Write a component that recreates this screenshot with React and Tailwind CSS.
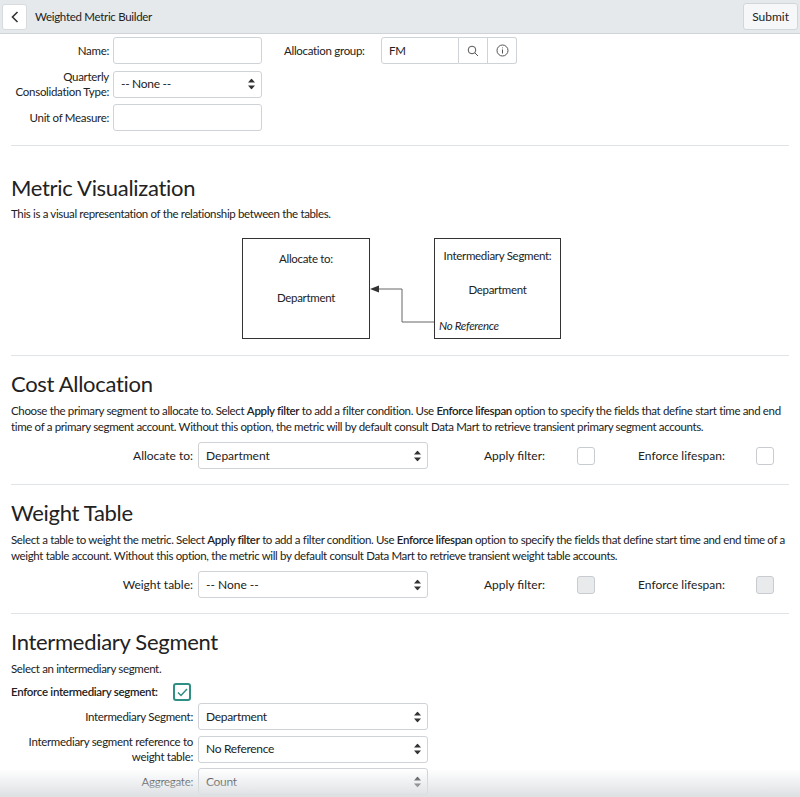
import React from "react";

const F = { fontFamily: "Lato, 'Open Sans', sans-serif" };

function Arrows() {
  return (
    <svg width="7" height="11" viewBox="0 0 7 11" className="absolute right-[6px] top-1/2 -translate-y-1/2">
      <path d="M3.5 0L7 4H0z M3.5 11L0 7h7z" fill="#333" />
    </svg>
  );
}
function Select({ value, w = "w-[230px]" }) {
  return (
    <div className={`relative ${w} h-[27px] border border-[#cfd3d7] rounded-[3px] bg-white flex items-center pl-[7px] text-[12px] text-[#222]`}>
      {value}
      <Arrows />
    </div>
  );
}
function Box({ disabled }) {
  return <div className={`w-[18px] h-[18px] rounded-[3px] border border-[#c8ccd0] ${disabled ? "bg-[#e8eaec]" : "bg-white"}`} />;
}
function Row({ label, value, disabled }) {
  return (
    <div className="flex items-center h-[27px] whitespace-nowrap">
      <div className="w-[198px] text-right text-[12px] pr-[5px] text-[#222]">{label}</div>
      <Select value={value} />
      <div className="w-[117px] text-right text-[12px] text-[#222]">Apply filter:</div>
      <div className="ml-[32px]"><Box disabled={disabled} /></div>
      <div className="w-[130px] text-right text-[12px] text-[#222]">Enforce lifespan:</div>
      <div className="ml-[31px]"><Box disabled={disabled} /></div>
    </div>
  );
}
const Hr = () => <div className="mx-[11px] border-t border-[#e1e4e7]" />;
const H = ({ children }) => <h2 className="px-[11px] text-[22px] text-[#222] leading-[28px] tracking-[-0.3px]">{children}</h2>;
const P = ({ children, className = "" }) => <p className={`px-[11px] text-[11.5px] leading-[16px] tracking-[-0.35px] ${className}`}>{children}</p>;

export default function App() {
  return (
    <div style={F} className="w-[800px] h-[797px] overflow-hidden bg-white relative text-[#222]">
      <div className="h-[34px] bg-[#e6e9ec] border-b border-[#cfd3d7] flex items-center">
        <div className="ml-[2px] w-[25px] h-[26px] bg-white border border-[#d8dbde] rounded-[3px] flex items-center justify-center">
          <svg width="8" height="12" viewBox="0 0 8 12"><path d="M6.5 1L1.5 6l5 5" stroke="#333" strokeWidth="1.6" fill="none" /></svg>
        </div>
        <div className="ml-[8px] text-[11.5px] tracking-[-0.3px]">Weighted Metric Builder</div>
        <div className="ml-auto mr-[2px] h-[27px] px-[8px] bg-[#f6f7f8] border border-[#d3d6d9] rounded-[3px] flex items-center text-[12px]">Submit</div>
      </div>

      <div className="flex pt-[3px] text-[11.5px] tracking-[-0.3px]">
        <div className="flex flex-col gap-[5px]">
          <div className="flex items-center"><div className="w-[113px] text-right pr-[4px]">Name:</div><div className="w-[149px] h-[27px] border border-[#cfd3d7] rounded-[3px]" /></div>
          <div className="flex items-center"><div className="w-[113px] text-right pr-[4px] leading-[15px]">Quarterly<br />Consolidation Type:</div><Select value="-- None --" w="w-[149px]" /></div>
          <div className="flex items-center"><div className="w-[113px] text-right pr-[4px]">Unit of Measure:</div><div className="w-[149px] h-[27px] border border-[#cfd3d7] rounded-[3px]" /></div>
        </div>
        <div className="flex items-start ml-[22px]">
          <div className="mt-[5px] w-[88px] whitespace-nowrap">Allocation group:</div>
          <div className="ml-[9px] w-[78px] h-[27px] border border-[#cfd3d7] rounded-l-[3px] flex items-center pl-[7px]">FM</div>
          <div className="w-[29px] h-[27px] border-y border-r border-[#cfd3d7] flex items-center justify-center">
            <svg width="12" height="12" viewBox="0 0 12 12"><circle cx="5" cy="5" r="3.8" stroke="#555" fill="none" /><path d="M8 8l3 3" stroke="#555" /></svg>
          </div>
          <div className="w-[29px] h-[27px] border-y border-r border-[#cfd3d7] rounded-r-[3px] flex items-center justify-center">
            <svg width="13" height="13" viewBox="0 0 13 13"><circle cx="6.5" cy="6.5" r="5.5" stroke="#555" fill="none" /><path d="M6.5 5.5v4M6.5 3.5v.8" stroke="#555" /></svg>
          </div>
        </div>
      </div>

      <div className="mt-[14px]"><Hr /></div>
      <div className="mt-[28px]"><H>Metric Visualization</H></div>
      <P className="mt-[4px]">This is a visual representation of the relationship between the tables.</P>
      <div className="flex mt-[16px] ml-[242px] items-start text-[11.5px] tracking-[-0.3px]">
        <div className="w-[128px] h-[101px] border border-[#333] flex flex-col items-center">
          <div className="mt-[11px]">Allocate to:</div>
          <div className="mt-[22px]">Department</div>
        </div>
        <svg width="64" height="101" viewBox="0 0 64 101">
          <path d="M8 51H32V84H64" stroke="#666" fill="none" />
          <path d="M0 51l9-3.5v7z" fill="#333" />
        </svg>
        <div className="w-[127px] h-[101px] border border-[#333] flex flex-col items-center">
          <div className="mt-[8px]">Intermediary Segment:</div>
          <div className="mt-[17px]">Department</div>
          <div className="mt-[18px] self-start ml-[4px] italic">No Reference</div>
        </div>
      </div>

      <div className="mt-[16px]"><Hr /></div>
      <div className="mt-[14px]"><H>Cost Allocation</H></div>
      <P className="mt-[5px]">Choose the primary segment to allocate to. Select <b className="font-semibold">Apply filter</b> to add a filter condition. Use <b className="font-semibold">Enforce lifespan</b> option to specify the fields that define start time and end time of a primary segment account. Without this option, the metric will by default consult Data Mart to retrieve transient primary segment accounts.</P>
      <div className="mt-[7px]"><Row label="Allocate to:" value="Department" /></div>

      <div className="mt-[15px]"><Hr /></div>
      <div className="mt-[14px]"><H>Weight Table</H></div>
      <P className="mt-[5px]">Select a table to weight the metric. Select <b className="font-semibold">Apply filter</b> to add a filter condition. Use <b className="font-semibold">Enforce lifespan</b> option to specify the fields that define start time and end time of a weight table account. Without this option, the metric will by default consult Data Mart to retrieve transient weight table accounts.</P>
      <div className="mt-[7px]"><Row label="Weight table:" value="-- None --" disabled /></div>

      <div className="mt-[15px]"><Hr /></div>
      <div className="mt-[14px]"><H>Intermediary Segment</H></div>
      <P className="mt-[5px]">Select an intermediary segment.</P>
      <div className="flex items-center mt-[6px] px-[11px]">
        <div className="text-[11.5px] tracking-[-0.3px] font-semibold w-[162px] whitespace-nowrap">Enforce intermediary segment:</div>
        <div className="w-[18px] h-[18px] rounded-[3px] border-2 border-[#2f8f83] flex items-center justify-center">
          <svg width="11" height="9" viewBox="0 0 11 9"><path d="M1 4.5l3 3L10 1" stroke="#2f8f83" strokeWidth="1.5" fill="none" /></svg>
        </div>
      </div>
      <div className="flex flex-col gap-[4px] mt-[2px] text-[11.5px] tracking-[-0.3px]">
        <div className="flex items-center"><div className="w-[198px] text-right pr-[5px]">Intermediary Segment:</div><Select value="Department" /></div>
        <div className="flex items-center"><div className="w-[198px] text-right pr-[5px] leading-[15px] whitespace-nowrap">Intermediary segment reference to<br />weight table:</div><Select value="No Reference" /></div>
        <div className="flex items-center"><div className="w-[198px] text-right pr-[5px]">Aggregate:</div><Select value="Count" /></div>
      </div>
      <div className="absolute left-0 right-0 bottom-0 h-[28px] bg-gradient-to-b from-transparent to-[#dde0e3] pointer-events-none" />
    </div>
  );
}
